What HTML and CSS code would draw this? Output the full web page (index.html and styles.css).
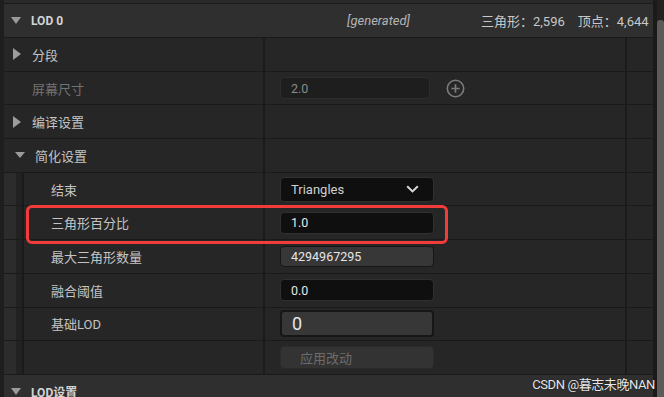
FILE: index.html
```html
<!DOCTYPE html>
<html lang="zh-CN">
<head>
    <meta charset="UTF-8">
    <meta name="viewport" content="width=device-width, initial-scale=1.0">
    <title>LOD 0 细节面板</title>
    <link rel="stylesheet" href="styles.css">
</head>
<body>
    <div class="page">
        <div class="rail"></div>
        <div class="panel">
            <div class="top-strip"></div>

            <div class="header">
                <span class="arrow-down"></span>
                <span class="header-title">LOD 0</span>
                <span class="generated">[generated]</span>
                <span class="stat">三角形：2,596</span>
                <span class="stat">顶点：4,644</span>
            </div>

            <div class="row">
                <div class="name"><span class="arrow-right"></span>分段</div>
                <div class="value"></div>
                <div class="extra"></div>
            </div>
            <div class="row">
                <div class="name disabled"><span class="arrow-space"></span>屏幕尺寸</div>
                <div class="value">
                    <div class="field field-disabled">2.0</div>
                    <svg class="plus" width="19" height="19" viewBox="0 0 19 19">
                        <circle cx="9.5" cy="9.5" r="8.2" fill="none" stroke="#7c7c7c" stroke-width="1.6"/>
                        <path d="M9.5 5.3v8.4M5.3 9.5h8.4" stroke="#7c7c7c" stroke-width="1.7"/>
                    </svg>
                </div>
                <div class="extra"></div>
            </div>
            <div class="row">
                <div class="name"><span class="arrow-right"></span>编译设置</div>
                <div class="value"></div>
                <div class="extra"></div>
            </div>
            <div class="row">
                <div class="name"><span class="arrow-down small"></span>简化设置</div>
                <div class="value"></div>
                <div class="extra"></div>
            </div>

            <div class="row">
                <div class="name child"><span class="indent"></span>结束</div>
                <div class="value">
                    <div class="field field-dark dropdown">
                        Triangles
                        <svg class="chevron" width="13" height="8" viewBox="0 0 13 8">
                            <path d="M1.2 1.2l5.3 5.2 5.3-5.2" fill="none" stroke="#d8d8d8" stroke-width="2"/>
                        </svg>
                    </div>
                </div>
                <div class="extra"></div>
            </div>
            <div class="row">
                <div class="name child"><span class="indent"></span>三角形百分比</div>
                <div class="value"><div class="field field-dark">1.0</div></div>
                <div class="extra"></div>
            </div>
            <div class="row">
                <div class="name child"><span class="indent"></span>最大三角形数量</div>
                <div class="value"><div class="field field-grey">4294967295</div></div>
                <div class="extra"></div>
            </div>
            <div class="row">
                <div class="name child"><span class="indent"></span>融合阈值</div>
                <div class="value"><div class="field field-dark">0.0</div></div>
                <div class="extra"></div>
            </div>
            <div class="row">
                <div class="name child"><span class="indent"></span>基础LOD</div>
                <div class="value"><div class="field field-grey field-big">0</div></div>
                <div class="extra"></div>
            </div>
            <div class="row">
                <div class="name child"><span class="indent"></span></div>
                <div class="value"><div class="apply-btn">应用改动</div></div>
                <div class="extra"></div>
            </div>

            <div class="header">
                <span class="arrow-down"></span>
                <span class="header-title">LOD设置</span>
            </div>
        </div>
        <div class="edge"></div>
        <div class="scrollbar"><div class="thumb"></div></div>
    </div>

    <div class="highlight"></div>
    <div class="watermark">CSDN @暮志未晚NAN</div>
</body>
</html>
```

FILE: styles.css
```css
body {
    margin: 0;
    padding: 0;
    background-color: #1c1c1c;
    font-family: Roboto, "Noto Sans CJK SC", sans-serif;
    font-size: 13px;
    color: #c4c4c4;
    overflow: hidden;
}

.page {
    display: flex;
    width: 664px;
    height: 397px;
    overflow: hidden;
}

.rail {
    width: 4px;
    background-color: #1e1e1e;
}

.panel {
    width: 649px;
    display: flex;
    flex-direction: column;
    background-color: #252525;
}

.edge {
    width: 4px;
    background-color: #1a1a1a;
}

.scrollbar {
    width: 7px;
    background-color: #222;
    display: flex;
    flex-direction: column;
}

.thumb {
    margin-top: 20px;
    flex: 1;
    background-color: #5b5b5b;
    border-radius: 3px 3px 0 0;
}

.top-strip {
    height: 3px;
    flex: none;
    background-color: #2a2a2a;
    border-bottom: 1px solid #1a1a1a;
}

/* category header */
.header {
    height: 33px;
    flex: none;
    display: flex;
    align-items: center;
    background-color: #2f2f2f;
    border-bottom: 1px solid #1a1a1a;
    padding-left: 7px;
}

.header-title {
    font-weight: bold;
    font-size: 12px;
    color: #d4d4d4;
    margin-left: 10px;
}

.generated {
    font-style: italic;
    color: #b4b4b4;
    margin-left: 284px;
}

.stat {
    color: #c8c8c8;
}

.generated + .stat {
    margin-left: 71px;
}

.stat + .stat {
    margin-left: 13px;
}

.arrow-down {
    width: 0;
    height: 0;
    border-left: 5.5px solid transparent;
    border-right: 5.5px solid transparent;
    border-top: 7px solid #9a9a9a;
}

.arrow-down.small {
    margin-left: 4px;
    margin-right: 10px;
    border-top-width: 6px;
}

.arrow-right {
    width: 0;
    height: 0;
    border-top: 6px solid transparent;
    border-bottom: 6px solid transparent;
    border-left: 8px solid #9c9c9c;
    margin-left: 2px;
    margin-right: 11px;
}

.arrow-space {
    width: 21px;
}

/* property rows */
.row {
    height: 32.7px;
    flex: none;
    display: flex;
    border-bottom: 1px solid #1a1a1a;
    background-color: #262626;
}

.name {
    display: flex;
    align-items: center;
    padding-left: 7px;
    box-sizing: border-box;
    border-right: 2px solid #1b1b1b;
    width: 261px;
}

.name.disabled {
    color: #727272;
}

.name.child {
    padding-left: 0;
}

.indent {
    align-self: stretch;
    width: 12px;
    margin-right: 29px;
    background-color: #2c2c2c;
    border-right: 6px solid #222;
    box-shadow: 2px 0 0 #1a1a1a;
}

.value {
    display: flex;
    align-items: center;
    padding-left: 15px;
    box-sizing: border-box;
    border-right: 2px solid #1b1b1b;
    width: 362px;
}

.extra {
    flex: 1;
}

/* widgets */
.field {
    width: 154px;
    height: 22px;
    box-sizing: border-box;
    border-radius: 4px;
    display: flex;
    align-items: center;
    padding-left: 10px;
    font-size: 12.5px;
    color: #e6e6e6;
}

.field-disabled {
    width: 150px;
    background-color: #1e1e1e;
    border: 1px solid #2d2d2d;
    color: #8a8a8a;
}

.field-dark {
    background-color: #0f0f0f;
    border: 1px solid #303030;
}

.field-grey {
    background-color: #373737;
    border: 1px solid #161616;
    height: 21px;
}

.field-big {
    height: 27px;
    border-width: 2px;
    font-size: 18px;
    padding-left: 10px;
}

.dropdown {
    height: 25px;
    justify-content: space-between;
    padding-right: 14px;
    font-size: 13px;
    color: #cfcfcf;
}

.chevron {
    display: block;
}

.plus {
    margin-left: 16px;
    display: block;
}

.apply-btn {
    width: 154px;
    height: 23px;
    box-sizing: border-box;
    border-radius: 4px;
    background-color: #333;
    border: 1px solid #2b2b2b;
    display: flex;
    align-items: center;
    padding-left: 19px;
    color: #6c6c6c;
}

/* annotation drawn over the screenshot */
.highlight {
    position: absolute;
    left: 26px;
    top: 205px;
    width: 422px;
    height: 39px;
    box-sizing: border-box;
    border: 3px solid #f23b3b;
    border-radius: 6px;
}

.watermark {
    position: absolute;
    right: 9px;
    top: 374px;
    font-size: 13px;
    letter-spacing: -0.4px;
    color: #e8e8e8;
    text-shadow: 0 0 1px #000;
}
```
